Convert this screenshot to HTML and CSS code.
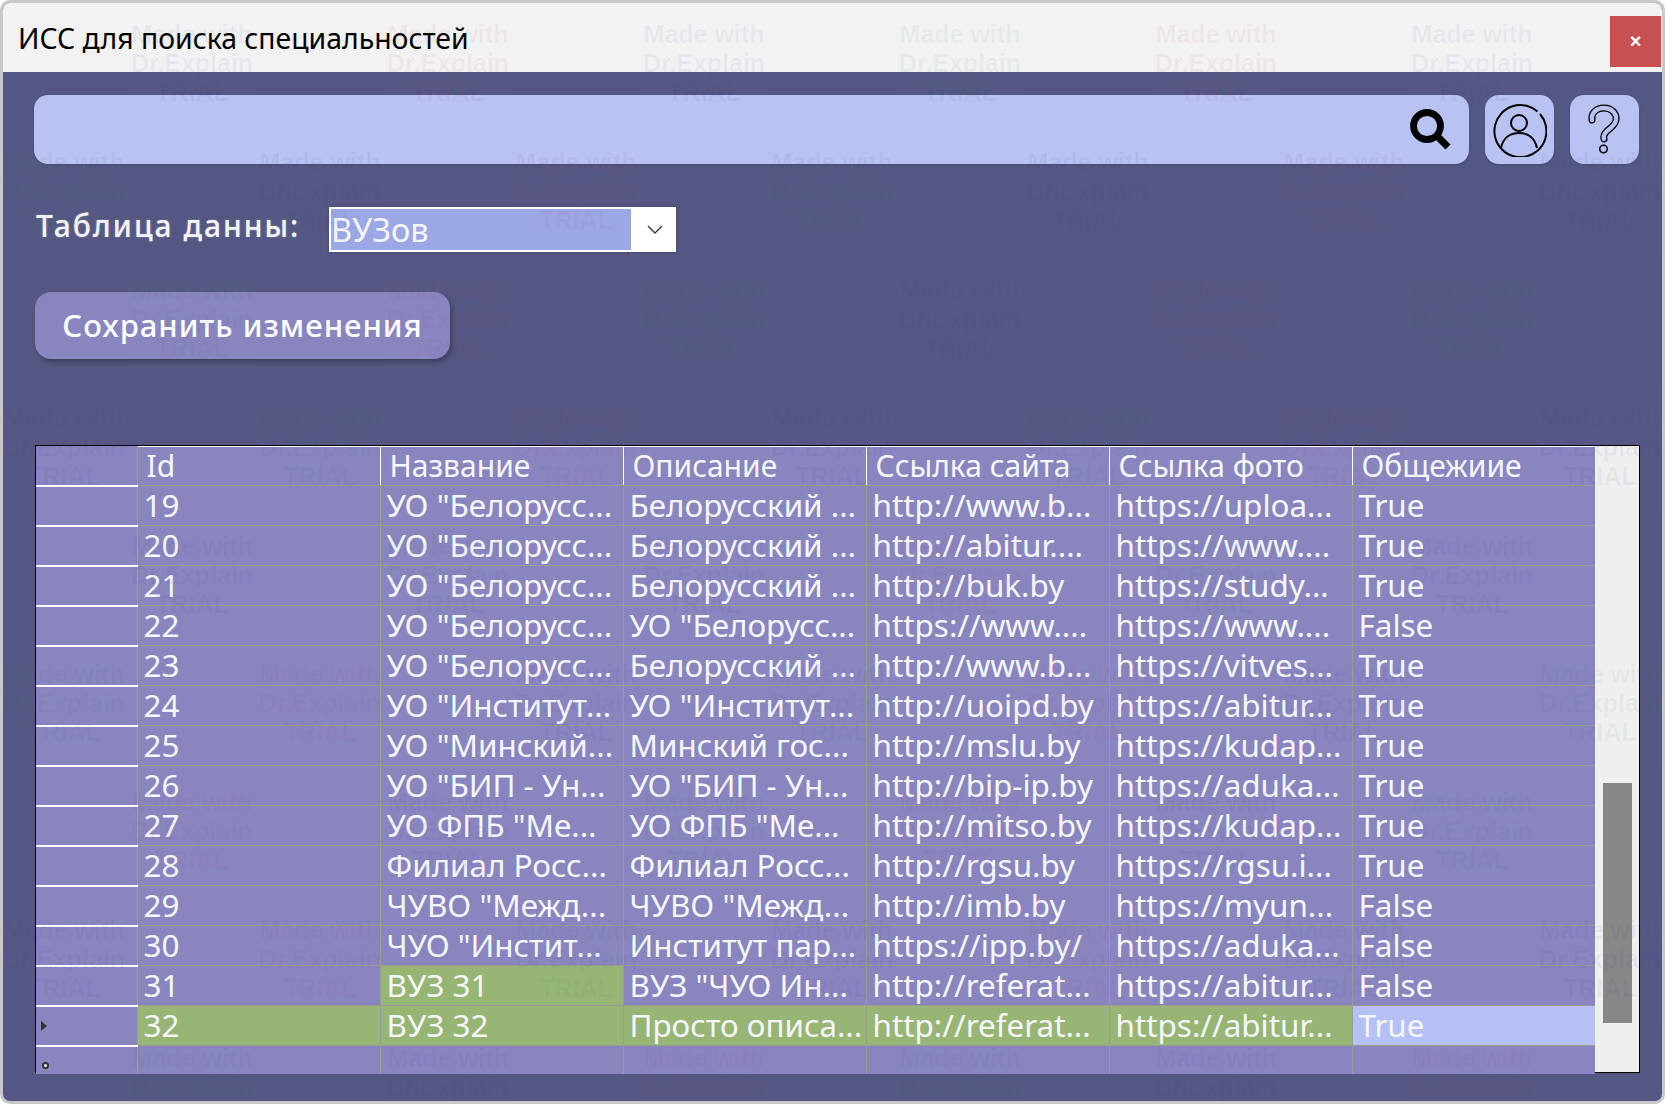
FILE: index.html
```html
<!DOCTYPE html>
<html lang="ru">
<head>
  <meta charset="UTF-8">
  <title>ИСС для поиска специальностей</title>
  <link rel="stylesheet" href="styles.css">
</head>
<body>
  <div class="window">
    <header class="titlebar">
      <span class="title">ИСС для поиска специальностей</span>
      <button class="close">×</button>
    </header>

    <main class="content">
      <div class="toolbar">
        <div class="search">
          <svg class="search-icon" width="44" height="44" viewBox="0 0 44 44"><circle cx="19" cy="19" r="13.5" fill="none" stroke="#000" stroke-width="6.800"/><path d="M29 29l11 11" stroke="#000" stroke-width="7"/></svg>
        </div>
        <div class="icon-btn">
          <svg class="user-icon" width="56" height="56" viewBox="0 0 56 56" fill="none" stroke="#000" stroke-width="2"><path d="M46.5 10.5A26 26 0 1 0 49 13"/><circle cx="28" cy="22" r="8"/><path d="M10 47c2-10 9-15 18-15s16 5 18 15"/></svg>
        </div>
        <div class="icon-btn">
          <svg class="help-icon" width="36" height="54" viewBox="0 0 36 54" fill="none"><path d="M6 17C5 9 11 5 18 5s13 5 12 12c-1 6-6 8-9 11-2 2-4 5-3 8" stroke="#000" stroke-width="7" stroke-linecap="round"/><path d="M6 17C5 9 11 5 18 5s13 5 12 12c-1 6-6 8-9 11-2 2-4 5-3 8" stroke="#b8c2f3" stroke-width="4.4" stroke-linecap="round"/><circle cx="17.500" cy="46" r="3.800" stroke="#000" stroke-width="1.600"/></svg>
        </div>
      </div>

      <div class="table-row">
        <label class="table-label">Таблица данны:</label>
        <div class="select">
          <span class="select-value">ВУЗов</span>
          <svg class="select-arrow" width="16" height="10" viewBox="0 0 16 10" fill="none" stroke="#333" stroke-width="1.300"><path d="M1 1l7 7 7-7"/></svg>
        </div>
      </div>

      <button class="save">Сохранить изменения</button>

      <div class="grid-wrap">
        <table class="grid">
          <thead>
            <tr><th class="rh"></th><th>Id</th><th>Название</th><th>Описание</th><th>Ссылка сайта</th><th>Ссылка фото</th><th>Общежиие</th></tr>
          </thead>
          <tbody>
            <tr><td class="rh"></td><td>19</td><td>УО "Белорусс...</td><td>Белорусский ...</td><td>http://www.b...</td><td>https://uploa...</td><td>True</td></tr>
            <tr><td class="rh"></td><td>20</td><td>УО "Белорусс...</td><td>Белорусский ...</td><td>http://abitur....</td><td>https://www....</td><td>True</td></tr>
            <tr><td class="rh"></td><td>21</td><td>УО "Белорусс...</td><td>Белорусский ...</td><td>http://buk.by</td><td>https://study...</td><td>True</td></tr>
            <tr><td class="rh"></td><td>22</td><td>УО "Белорусс...</td><td>УО "Белорусс...</td><td>https://www....</td><td>https://www....</td><td>False</td></tr>
            <tr><td class="rh"></td><td>23</td><td>УО "Белорусс...</td><td>Белорусский ...</td><td>http://www.b...</td><td>https://vitves...</td><td>True</td></tr>
            <tr><td class="rh"></td><td>24</td><td>УО "Институт...</td><td>УО "Институт...</td><td>http://uoipd.by</td><td>https://abitur...</td><td>True</td></tr>
            <tr><td class="rh"></td><td>25</td><td>УО "Минский...</td><td>Минский гос...</td><td>http://mslu.by</td><td>https://kudap...</td><td>True</td></tr>
            <tr><td class="rh"></td><td>26</td><td>УО "БИП - Ун...</td><td>УО "БИП - Ун...</td><td>http://bip-ip.by</td><td>https://aduka...</td><td>True</td></tr>
            <tr><td class="rh"></td><td>27</td><td>УО ФПБ "Ме...</td><td>УО ФПБ "Ме...</td><td>http://mitso.by</td><td>https://kudap...</td><td>True</td></tr>
            <tr><td class="rh"></td><td>28</td><td>Филиал Росс...</td><td>Филиал Росс...</td><td>http://rgsu.by</td><td>https://rgsu.i...</td><td>True</td></tr>
            <tr><td class="rh"></td><td>29</td><td>ЧУВО "Межд...</td><td>ЧУВО "Межд...</td><td>http://imb.by</td><td>https://myun...</td><td>False</td></tr>
            <tr><td class="rh"></td><td>30</td><td>ЧУО "Инстит...</td><td>Институт пар...</td><td>https://ipp.by/</td><td>https://aduka...</td><td>False</td></tr>
            <tr><td class="rh"></td><td>31</td><td class="green">ВУЗ 31</td><td>ВУЗ "ЧУО Ин...</td><td>http://referat...</td><td>https://abitur...</td><td>False</td></tr>
            <tr class="green"><td class="rh"><span class="arrow"></span></td><td>32</td><td>ВУЗ 32</td><td>Просто описа...</td><td>http://referat...</td><td>https://abitur...</td><td class="selected">True</td></tr>
            <tr class="new-row"><td class="rh"><span class="star"></span></td><td></td><td></td><td></td><td></td><td></td><td></td></tr>
          </tbody>
        </table>
        <div class="scrollbar"><div class="thumb"></div></div>
      </div>
    </main>
  </div>

  <div class="watermarks">
    <div class="wm-row shifted">
      <div class="wm a">Made with<br>Dr.Explain<br>TRIAL</div><div class="wm b">Made with<br>Dr.Explain<br>TRIAL</div><div class="wm a">Made with<br>Dr.Explain<br>TRIAL</div><div class="wm c">Made with<br>Dr.Explain<br>TRIAL</div><div class="wm b">Made with<br>Dr.Explain<br>TRIAL</div><div class="wm a">Made with<br>Dr.Explain<br>TRIAL</div>
    </div>
    <div class="wm-row">
      <div class="wm c">Made with<br>Dr.Explain<br>TRIAL</div><div class="wm a">Made with<br>Dr.Explain<br>TRIAL</div><div class="wm b">Made with<br>Dr.Explain<br>TRIAL</div><div class="wm c">Made with<br>Dr.Explain<br>TRIAL</div><div class="wm a">Made with<br>Dr.Explain<br>TRIAL</div><div class="wm b">Made with<br>Dr.Explain<br>TRIAL</div><div class="wm a">Made with<br>Dr.Explain<br>TRIAL</div>
    </div>
    <div class="wm-row shifted">
      <div class="wm c">Made with<br>Dr.Explain<br>TRIAL</div><div class="wm b">Made with<br>Dr.Explain<br>TRIAL</div><div class="wm c">Made with<br>Dr.Explain<br>TRIAL</div><div class="wm a">Made with<br>Dr.Explain<br>TRIAL</div><div class="wm b">Made with<br>Dr.Explain<br>TRIAL</div><div class="wm c">Made with<br>Dr.Explain<br>TRIAL</div>
    </div>
    <div class="wm-row">
      <div class="wm a">Made with<br>Dr.Explain<br>TRIAL</div><div class="wm c">Made with<br>Dr.Explain<br>TRIAL</div><div class="wm b">Made with<br>Dr.Explain<br>TRIAL</div><div class="wm a">Made with<br>Dr.Explain<br>TRIAL</div><div class="wm c">Made with<br>Dr.Explain<br>TRIAL</div><div class="wm b">Made with<br>Dr.Explain<br>TRIAL</div><div class="wm a">Made with<br>Dr.Explain<br>TRIAL</div>
    </div>
    <div class="wm-row shifted">
      <div class="wm a">Made with<br>Dr.Explain<br>TRIAL</div><div class="wm c">Made with<br>Dr.Explain<br>TRIAL</div><div class="wm a">Made with<br>Dr.Explain<br>TRIAL</div><div class="wm b">Made with<br>Dr.Explain<br>TRIAL</div><div class="wm c">Made with<br>Dr.Explain<br>TRIAL</div><div class="wm a">Made with<br>Dr.Explain<br>TRIAL</div>
    </div>
    <div class="wm-row">
      <div class="wm c">Made with<br>Dr.Explain<br>TRIAL</div><div class="wm b">Made with<br>Dr.Explain<br>TRIAL</div><div class="wm a">Made with<br>Dr.Explain<br>TRIAL</div><div class="wm c">Made with<br>Dr.Explain<br>TRIAL</div><div class="wm b">Made with<br>Dr.Explain<br>TRIAL</div><div class="wm a">Made with<br>Dr.Explain<br>TRIAL</div><div class="wm c">Made with<br>Dr.Explain<br>TRIAL</div>
    </div>
    <div class="wm-row shifted">
      <div class="wm b">Made with<br>Dr.Explain<br>TRIAL</div><div class="wm a">Made with<br>Dr.Explain<br>TRIAL</div><div class="wm c">Made with<br>Dr.Explain<br>TRIAL</div><div class="wm b">Made with<br>Dr.Explain<br>TRIAL</div><div class="wm a">Made with<br>Dr.Explain<br>TRIAL</div><div class="wm c">Made with<br>Dr.Explain<br>TRIAL</div>
    </div>
    <div class="wm-row">
      <div class="wm a">Made with<br>Dr.Explain<br>TRIAL</div><div class="wm b">Made with<br>Dr.Explain<br>TRIAL</div><div class="wm c">Made with<br>Dr.Explain<br>TRIAL</div><div class="wm a">Made with<br>Dr.Explain<br>TRIAL</div><div class="wm b">Made with<br>Dr.Explain<br>TRIAL</div><div class="wm c">Made with<br>Dr.Explain<br>TRIAL</div><div class="wm a">Made with<br>Dr.Explain<br>TRIAL</div>
    </div>
    <div class="wm-row shifted">
      <div class="wm c">Made with<br>Dr.Explain<br>TRIAL</div><div class="wm a">Made with<br>Dr.Explain<br>TRIAL</div><div class="wm b">Made with<br>Dr.Explain<br>TRIAL</div><div class="wm c">Made with<br>Dr.Explain<br>TRIAL</div><div class="wm a">Made with<br>Dr.Explain<br>TRIAL</div><div class="wm b">Made with<br>Dr.Explain<br>TRIAL</div>
    </div>
  </div>
</body>
</html>
```

FILE: styles.css
```css
html, body {
  margin: 0;
  padding: 0;
  background: #fff;
  overflow: hidden;
}
body {
  position: relative;
  width: 1665px;
  height: 1104px;
  font-family: "Noto Sans", "Open Sans", sans-serif;
}
.window {
  box-sizing: border-box;
  width: 1665px;
  height: 1104px;
  border: 3px solid #c8c8c8;
  border-radius: 10px;
  overflow: hidden;
  background: #545782;
}
.titlebar {
  height: 69px;
  display: flex;
  align-items: center;
  justify-content: space-between;
  padding-left: 15px;
  background: #f2f2f2;
}
.title {
  font-size: 28.4px;
  color: #000;
}
.close {
  width: 51px;
  height: 51px;
  margin-top: 8px;
  margin-right: 1px;
  border: none;
  padding: 0;
  background: #c75050;
  color: #fff;
  font-size: 20px;
  font-weight: bold;
  font-family: "Liberation Sans", sans-serif;
}
.content {
  padding: 23px 23px 0 31px;
}
.toolbar {
  display: flex;
  gap: 16px;
}
.search {
  flex: 1;
  height: 69px;
  display: flex;
  align-items: center;
  justify-content: flex-end;
  padding-right: 17px;
  border-radius: 14px;
  background: #b8c2f3;
  box-shadow: 0 1px 3px rgba(0,0,0,0.15);
}
.search-icon {
  margin-top: -2px;
}
.icon-btn {
  width: 69px;
  height: 69px;
  display: flex;
  align-items: center;
  justify-content: center;
  border-radius: 14px;
  background: #b8c2f3;
  box-shadow: 0 1px 3px rgba(0,0,0,0.15);
}
.user-icon {
  margin: -2px 2px 0 0;
}
.help-icon {
  margin: 0 2px 0 0;
}
.table-row {
  display: flex;
  align-items: center;
  height: 45px;
  margin-top: 43px;
}
.table-label {
  width: 293px;
  padding-left: 2px;
  padding-bottom: 8px;
  color: #f4f4fa;
  font-size: 30px;
  font-weight: 500;
  line-height: 34px;
  letter-spacing: 2px;
  text-shadow: 0 0 2px rgba(255,255,255,0.35);
}
.select {
  box-sizing: border-box;
  width: 347px;
  height: 45px;
  display: flex;
  align-items: center;
  padding: 2px;
  background: #fff;
  box-shadow: 0 0 3px rgba(0,0,0,0.25);
}
.select-value {
  width: 300px;
  height: 100%;
  box-sizing: border-box;
  background: #9ba8e5;
  color: #f5f6fd;
  font-size: 32.5px;
  line-height: 41px;
}
.select-arrow {
  margin-left: 16px;
}
.save {
  display: block;
  width: 415px;
  height: 67px;
  margin: 40px 0 0 1px;
  border: none;
  border-radius: 16px;
  background: #8986bf;
  color: #fff;
  font-family: inherit;
  font-size: 31px;
  font-weight: 500;
  letter-spacing: 1px;
  padding-bottom: 3px;
  box-shadow: 2px 3px 5px rgba(0,0,0,0.3);
}
.grid-wrap {
  box-sizing: border-box;
  width: 1605px;
  height: 628px;
  margin: 86px 0 0 1px;
  display: flex;
  border: 1px solid #000;
  background: #efefef;
}
.grid {
  width: 1558px;
  border-collapse: collapse;
  table-layout: fixed;
  align-self: flex-start;
  color: #f6f6fc;
  font-size: 31.4px;
  background: #8986bf;
}
.grid th, .grid td {
  box-sizing: border-box;
  width: 243px;
  height: 40px;
  padding: 0 0 2px 6px;
  border: 1px solid #9b9b93;
  white-space: nowrap;
  font-weight: normal;
  text-align: left;
  line-height: 36px;
}
.grid th {
  height: 37px;
  padding: 0 0 0 9px;
  font-size: 30px;
  line-height: 38px;
  border-top: 1px solid #fff;
  border-left: 1px solid #fff;
  border-right: none;
}
.grid .rh {
  width: 100px;
  border-left: 2px solid #8986bf;
  border-right: 1px solid #9b9b93;
  border-top: none;
  border-bottom: 2px solid #fff;
  padding: 0;
  position: relative;
}
.grid td:last-child {
  border-right: none;
}
.green td, td.green {
  background: #97b674;
}
.green td.rh {
  background: #8986bf;
}
.grid td.selected {
  background: #b5c1f5;
}
.new-row td {
  height: 28px;
  border-bottom: none;
}
.grid .new-row .rh {
  border-bottom: none;
}
.arrow {
  position: absolute;
  left: 3px;
  top: 14px;
  width: 0;
  height: 0;
  border-top: 5px solid transparent;
  border-bottom: 5px solid transparent;
  border-left: 6px solid #333;
}
.star {
  position: absolute;
  left: 4px;
  top: 15px;
  width: 3px;
  height: 3px;
  border: 2px solid #333;
  border-radius: 50%;
  background: #fff;
}
.scrollbar {
  flex: 1;
  padding: 337px 7px 0 8px;
}
.thumb {
  height: 240px;
  background: #878787;
}
/* trial watermark tiled over the whole window */
.watermarks {
  position: absolute;
  inset: 0;
  overflow: hidden;
  pointer-events: none;
}
.wm-row {
  display: flex;
  gap: 128px;
  height: 128px;
}
.wm-row.shifted {
  padding-left: 128px;
}
.wm {
  flex: none;
  box-sizing: border-box;
  width: 128px;
  height: 128px;
  padding-top: 20px;
  text-align: center;
  font-family: "Liberation Sans", sans-serif;
  font-size: 25px;
  font-weight: bold;
  line-height: 29px;
  background-color: rgba(255,255,255,0.008);
}
.wm.a {
  color: rgba(70,50,170,0.06);
}
.wm.b {
  color: rgba(170,40,110,0.06);
}
.wm.c {
  color: rgba(40,110,110,0.06);
}
```
